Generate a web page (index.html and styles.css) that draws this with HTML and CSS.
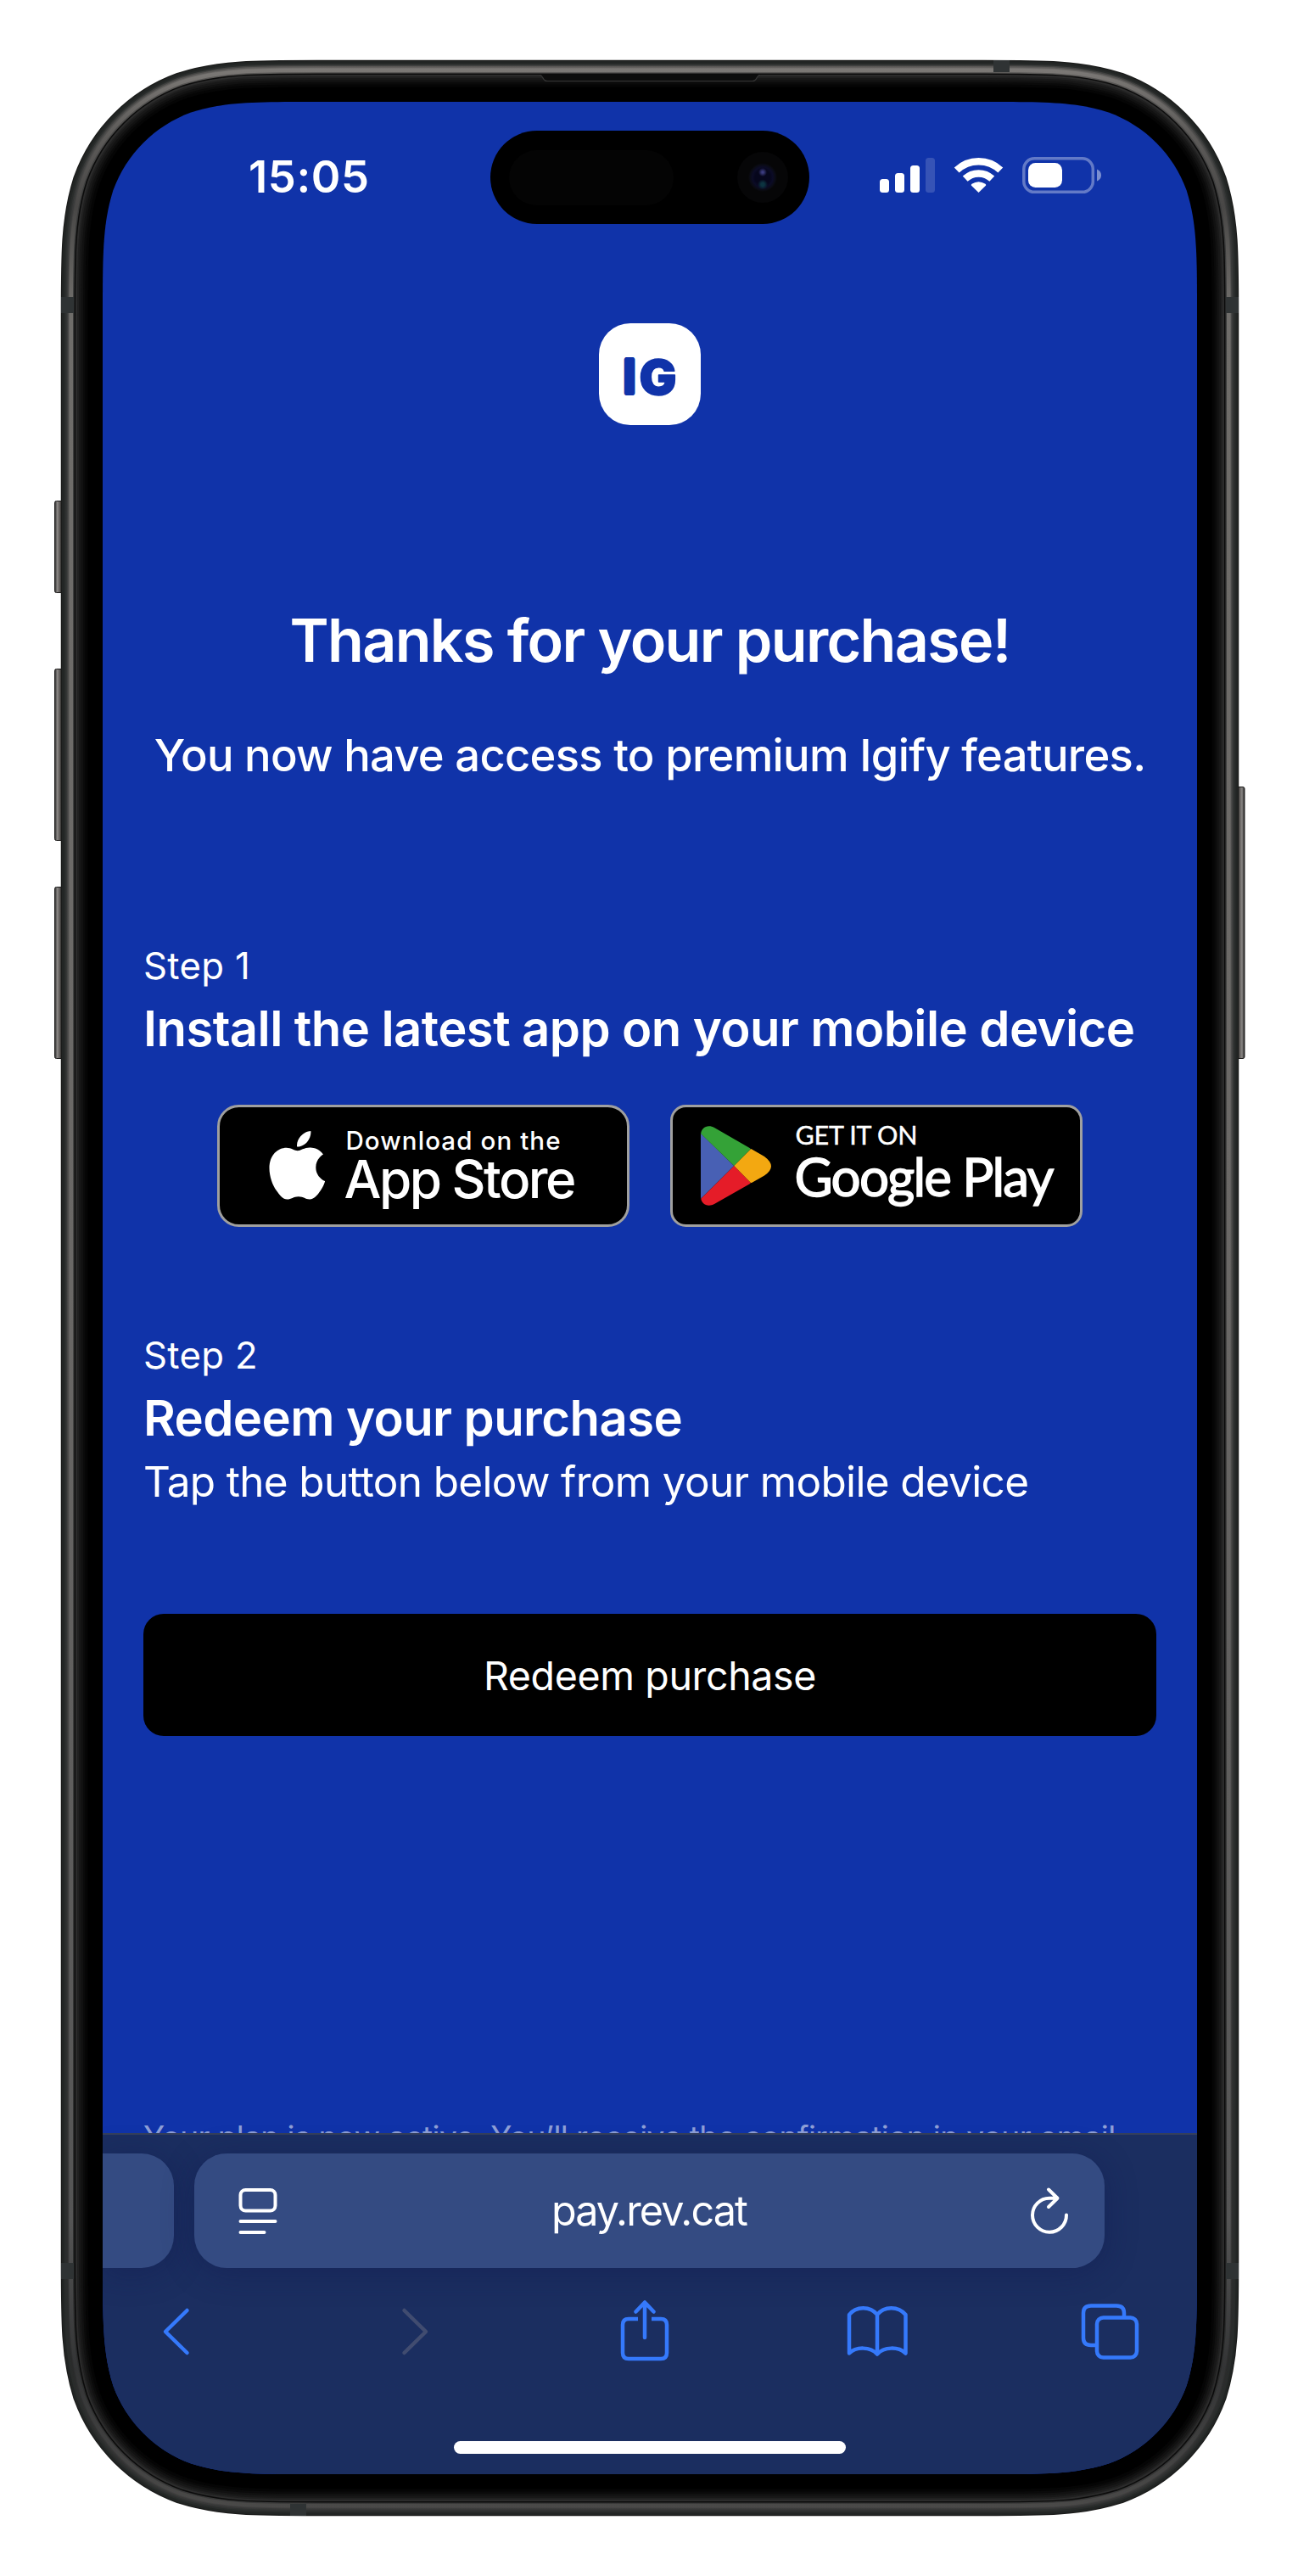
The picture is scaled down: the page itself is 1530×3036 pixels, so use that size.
FILE: index.html
```html
<!DOCTYPE html>
<html lang="en">
<head>
<meta charset="utf-8">
<title>Thanks for your purchase!</title>
<link rel="stylesheet" href="styles.css">
</head>
<body>
<div class="stage">
  <svg class="frame" width="1530" height="3036" viewBox="0 0 1530 3036" aria-hidden="true">
    <defs>
      <linearGradient id="metal" gradientUnits="userSpaceOnUse" x1="0" y1="70" x2="0" y2="2966">
        <stop offset="0" stop-color="#807d7a"/><stop offset=".03" stop-color="#5e5c5a"/><stop offset=".06" stop-color="#484746"/><stop offset=".1" stop-color="#6f6d6a"/><stop offset=".5" stop-color="#6a6866"/><stop offset=".88" stop-color="#555"/><stop offset=".94" stop-color="#333435"/><stop offset="1" stop-color="#4c4b4a"/>
      </linearGradient>
      <linearGradient id="metal2" gradientUnits="userSpaceOnUse" x1="0" y1="70" x2="0" y2="2966">
        <stop offset="0" stop-color="#5c5a58"/><stop offset=".06" stop-color="#393a3a"/><stop offset=".5" stop-color="#474746"/><stop offset=".94" stop-color="#2a2b2b"/><stop offset="1" stop-color="#3a3a3a"/>
      </linearGradient>
      <linearGradient id="keyL" x1="0" y1="0" x2="1" y2="0"><stop offset="0" stop-color="#222"/><stop offset=".25" stop-color="#8a8785"/><stop offset=".6" stop-color="#4a4644"/><stop offset="1" stop-color="#252322"/></linearGradient>
      <linearGradient id="keyR" x1="1" y1="0" x2="0" y2="0"><stop offset="0" stop-color="#222"/><stop offset=".25" stop-color="#8a8785"/><stop offset=".6" stop-color="#4a4644"/><stop offset="1" stop-color="#252322"/></linearGradient>
      <path id="body" d="M373.2 120H1158.8C1231.4 120 1267.7 120 1306.8 132.4C1349.5 147.9 1383.1 181.5 1398.6 224.2C1411 263.3 1411 299.6 1411 372.2V2663.8C1411 2736.4 1411 2772.7 1398.6 2811.8C1383.1 2854.5 1349.5 2888.1 1306.8 2903.6C1267.7 2916 1231.4 2916 1158.8 2916H373.2C300.6 2916 264.3 2916 225.2 2903.6C182.5 2888.1 148.9 2854.5 133.4 2811.8C121 2772.7 121 2736.4 121 2663.8V372.2C121 299.6 121 263.3 133.4 224.2C148.9 181.5 182.5 147.9 225.2 132.4C264.3 120 300.6 120 373.2 120Z"/>
    </defs>
    <g stroke="#1c1b1b" stroke-width="1">
      <rect x="64.500" y="590.500" width="12" height="108" rx="2" fill="url(#keyL)"/>
      <rect x="64.500" y="788.500" width="12" height="202" rx="2" fill="url(#keyL)"/>
      <rect x="64.500" y="1045.500" width="12" height="202" rx="2" fill="url(#keyL)"/>
      <rect x="1455" y="927.500" width="12" height="320" rx="2" fill="url(#keyR)"/>
    </g>
    <g fill="none">
      <use href="#body" stroke="#1b1c1b" stroke-width="98.500"/>
      <use href="#body" stroke="#222524" stroke-width="96"/>
      <use href="#body" stroke="#292c2b" stroke-width="91"/>
      <use href="#body" stroke="url(#metal2)" stroke-width="87" opacity=".5"/>
      <use href="#body" stroke="url(#metal2)" stroke-width="84"/>
      <use href="#body" stroke="url(#metal)" stroke-width="81" opacity=".5"/>
      <use href="#body" stroke="url(#metal)" stroke-width="79"/>
      <use href="#body" stroke="url(#metal2)" stroke-width="70"/>
      <use href="#body" stroke="#0b0b0b" stroke-width="67"/>
      <use href="#body" stroke="#2b2b2b" stroke-width="64"/>
      <use href="#body" stroke="#202020" stroke-width="60"/>
      <use href="#body" stroke="#181818" stroke-width="56"/>
      <use href="#body" stroke="#111" stroke-width="51"/>
      <use href="#body" stroke="#0a0a0a" stroke-width="46"/>
      <use href="#body" stroke="#050505" stroke-width="41"/>
      <use href="#body" stroke="#000" stroke-width="35"/>
    </g>
    <g fill="#2f3334">
      <rect x="72" y="350" width="15" height="19"/><rect x="1445" y="350" width="15" height="19"/>
      <rect x="72" y="2667" width="15" height="19"/><rect x="1445" y="2667" width="15" height="19"/>
      <rect x="1171" y="71" width="19" height="14"/><rect x="342" y="2951" width="19" height="14"/>
    </g>
    <path d="M636 87.500C641 88 639 95.500 645 95.500H887C893 95.500 891 88 896 87.500Z" fill="#0c0c0c"/>
    <path d="M636 88.500C641 89 639 95.500 645 95.500H887C893 95.500 891 89 896 88.500" fill="none" stroke="#343434" stroke-width="1.200"/>
  </svg>

  <main class="screen">
    <header class="status">
      <span class="time">15:05</span>
      <div class="island"><span class="sensor"></span><span class="camera"></span></div>
      <svg class="indicators" width="264" height="44" viewBox="1036 185 264 44">
        <g fill="#fff"><rect x="1037" y="211" width="11" height="16" rx="3.500"/><rect x="1055" y="204" width="11" height="23" rx="3.500"/><rect x="1073" y="195" width="11" height="32" rx="3.500"/><rect x="1091" y="186" width="11" height="41" rx="3.500" opacity=".16"/></g>
        <g fill="none" stroke="#fff" stroke-width="8.500"><path d="M1127.700 200.500A37.500 37.500 0 0 1 1179.300 200.500"/><path d="M1137.700 210.700A23 23 0 0 1 1169.300 210.700"/></g>
        <path d="M1153.500 227L1144.800 218.400Q1144.600 217.500 1145.500 216.800Q1153.500 211.500 1161.500 216.800Q1162.400 217.500 1162.200 218.400Z" fill="#fff"/>
        <rect x="1206.800" y="186.800" width="81.500" height="39.500" rx="12.500" fill="none" stroke="#fff" stroke-width="3.500" opacity=".35"/>
        <rect x="1212" y="192" width="40" height="29" rx="8.500" fill="#fff"/>
        <path d="M1293 199.500Q1298 201.500 1298 206.500T1293 213.500Z" fill="#fff" opacity=".45"/>
      </svg>
    </header>

    <section class="page">
      <div class="logo"><svg width="120" height="120" viewBox="0 0 120 120"><text class="mark mark-i" x="30" y="82" textLength="12" lengthAdjust="spacingAndGlyphs">I</text><text class="mark mark-g" x="47.500" y="83.500" textLength="44" lengthAdjust="spacingAndGlyphs">G</text></svg></div>
      <h1 class="title"><span>Thanks for your purchase!</span></h1>
      <p class="lead"><span>You now have access to premium Igify features.</span></p>

      <p class="step step-one"><span>Step 1</span></p>
      <h2 class="heading"><span>Install the latest app on your mobile device</span></h2>
      <div class="badges">
        <svg width="486" height="144" viewBox="0 0 486 144" role="img" aria-label="App Store">
          <rect x="1.500" y="1.500" width="483" height="141" rx="24" fill="#000" stroke="#a0a09f" stroke-width="3"/>
          <g transform="translate(61.500 31) scale(.0806)" fill="#fff"><path d="M788.100 340.900c-5.800 4.500-108.200 62.200-108.200 190.500 0 148.400 130.300 200.900 134.200 202.200-.6 3.200-20.700 71.900-68.700 141.900-42.800 61.600-87.500 123.100-155.500 123.100s-85.500-39.500-164-39.500c-76.500 0-103.700 40.800-165.900 40.800s-105.600-57-155.500-127C46.700 790.700 0 663 0 541.800c0-194.400 126.400-297.500 250.800-297.500 66.100 0 121.200 43.400 162.700 43.400 39.500 0 101.100-46 176.300-46 28.500 0 130.900 2.600 198.300 99.200zm-234-181.500c31.100-36.900 53.100-88.100 53.100-139.300 0-7.100-.6-14.300-1.900-20.100-50.600 1.900-110.800 33.700-147.100 75.800-28.500 32.400-55.100 83.600-55.100 135.500 0 7.800 1.300 15.600 1.900 18.100 3.200.6 8.400 1.300 13.600 1.300 45.400 0 102.500-30.400 135.500-71.300z"/></g>
          <text class="b-small" x="151.500" y="53" textLength="253">Download on the</text>
          <text class="b-large" x="149.500" y="109.700" textLength="274">App Store</text>
        </svg>
        <svg width="486" height="144" viewBox="0 0 486 144" role="img" aria-label="Google Play">
          <rect x="1.500" y="1.500" width="483" height="141" rx="17" fill="#000" stroke="#a0a09f" stroke-width="3"/>
          <clipPath id="tri"><path d="M36 36C36 26 45 23 52 27L111 61Q119 67 119 72.500T111 83.500L52 117C45 121 36 118 36 108Z"/></clipPath>
          <g clip-path="url(#tri)"><path fill="#4860b4" d="M30 28L75.300 72L30 117Z"/><path fill="#34a237" d="M36 34L30 28V15H70L95 52.300L75.300 72Z"/><path fill="#e51c28" d="M36 111L30 117V130H70L95 92L75.300 72Z"/><path fill="#f3a811" d="M95 52.300L130 40V105L95 92L75.300 72Z"/></g>
          <text class="g-small" x="147.500" y="46.700" textLength="144">GET IT ON</text>
          <text class="g-large" x="146.500" y="108" textLength="306">Google Play</text>
        </svg>
      </div>

      <p class="step step-two"><span>Step 2</span></p>
      <h2 class="heading"><span>Redeem your purchase</span></h2>
      <p class="hint"><span>Tap the button below from your mobile device</span></p>
      <a class="redeem"><span>Redeem purchase</span></a>
      <p class="note"><span>Your plan is now active. You’ll receive the confirmation in your email</span></p>
    </section>

    <nav class="browser">
      <div class="tabs">
        <div class="tab previous"></div>
        <div class="tab address">
          <svg width="46" height="56" viewBox="281.500 2578 46 56" fill="none" stroke="#fff" stroke-width="4"><rect x="284" y="2581" width="41" height="24.500" rx="6"/><path d="M284 2618H325M284 2631H312" stroke-linecap="round"/></svg>
          <span class="url">pay.rev.cat</span>
          <svg width="46" height="58" viewBox="1214 2575 46 58" fill="none" stroke="#fff" stroke-width="4" stroke-linecap="round" stroke-linejoin="round"><path d="M1257 2608.500A20 20 0 1 1 1237 2588.700H1246M1236 2578.500L1246.500 2588.700L1236 2599"/></svg>
        </div>
      </div>
      <svg class="tools" width="1290" height="80" viewBox="121 2708 1290 80" fill="none" stroke="#3579fb" stroke-width="4.500" stroke-linecap="round" stroke-linejoin="round">
        <path d="M220.500 2723L195 2748L220.500 2773"/>
        <path d="M476.500 2723L502 2748L476.500 2773" stroke="#414c70"/>
        <path stroke-linecap="butt" d="M752 2733H741Q734 2733 734 2740V2773Q734 2780 741 2780H779Q786 2780 786 2773V2740Q786 2733 779 2733H768"/>
        <path d="M760 2755V2714M749.500 2724.500L760 2713.500L770.500 2724.500"/>
        <path d="M1034 2728C1026 2717.500 1009 2717.500 1001 2728V2773.500C1009 2765.500 1026 2765.500 1034 2774.500C1042 2765.500 1059 2765.500 1067.500 2773.500V2728C1059 2717.500 1042 2717.500 1034 2728ZV2774"/>
        <rect x="1293" y="2731.500" width="47" height="47" rx="7.500"/>
        <path stroke-linecap="butt" d="M1293 2764H1286Q1277 2764 1277 2755.500V2726Q1277 2717.500 1286 2717.500H1316Q1325 2717.500 1325 2726V2731"/>
      </svg>
      <div class="home"></div>
    </nav>
  </main>
</div>
</body>
</html>
```
FILE: styles.css
```css
* { box-sizing: border-box; }
body { margin: 0; background: #fff; font-family: Inter, "Liberation Sans", sans-serif; color: #fff; font-optical-sizing: none; }
h1, h2, p { margin: 0; white-space: nowrap; }
svg { display: block; flex: none; }
.stage { position: relative; width: 1530px; height: 3036px; padding: 120px 119px 120px 121px; overflow: hidden; }
.frame { position: absolute; left: 0; top: 0; }
.screen {
  position: relative; width: 1290px; height: 2796px; display: flex; flex-direction: column; background: #1033a9;
  clip-path: path("M252.200 0H1037.800C1110.400 0 1146.700 0 1185.800 12.400C1228.500 27.900 1262.100 61.500 1277.600 104.200C1290 143.300 1290 179.600 1290 252.200V2543.800C1290 2616.400 1290 2652.700 1277.600 2691.800C1262.100 2734.500 1228.500 2768.100 1185.800 2783.600C1146.700 2796 1110.400 2796 1037.800 2796H252.200C179.600 2796 143.300 2796 104.200 2783.600C61.500 2768.100 27.900 2734.500 12.400 2691.800C0 2652.700 0 2616.400 0 2543.800V252.200C0 179.600 0 143.300 12.400 104.200C27.900 61.500 61.500 27.900 104.200 12.400C143.300 0 179.600 0 252.200 0Z");
}
.status { height: 261px; padding: 34px 111px 0 172px; display: flex; align-items: flex-start; flex: none; }
.time { width: 285px; margin-top: 22px; font-size: 52.500px; line-height: 64px; font-weight: 600; letter-spacing: .6px; }
.island { width: 376px; height: 110px; border-radius: 55px; background: #000; display: flex; align-items: center; justify-content: space-between; padding: 0 25px 0 22px; }
.sensor { width: 194px; height: 65px; border-radius: 33px; background: #040404; }
.camera { width: 60px; height: 60px; border-radius: 50%; background: radial-gradient(circle at 50% 40%, #3c3c80 0 1px, transparent 5px), radial-gradient(circle at 50% 64%, #0c3340 0 2px, transparent 6px), radial-gradient(circle, #06061c 0 9px, #0b0b26 12px, #0a0b14 15px, #060607 17px); }
.indicators { margin: 31px 0 0 82px; }
.page { flex: 1; min-height: 0; overflow: hidden; padding: 0 48px; display: flex; flex-direction: column; }
.logo { align-self: center; width: 120px; height: 120px; border-radius: 37px; background: #fff; flex: none; }
.mark { font-family: Inter, sans-serif; font-weight: 900; fill: #1033a9; stroke: #1033a9; stroke-linejoin: round; }
.mark-i { font-size: 54px; stroke-width: 6px; }
.mark-g { font-size: 57px; stroke-width: 1.500px; }
.title { margin-top: 208px; text-align: center; font-size: 70px; line-height: 92px; font-weight: 600; letter-spacing: -1.700px; }
.lead { margin-top: 53px; text-align: center; font-size: 52.500px; line-height: 72px; font-weight: 450; letter-spacing: -.700px; }
.step { font-size: 43.700px; line-height: 60px; letter-spacing: .300px; }
.step-one { margin-top: 183px; }
.heading { margin-top: 7px; font-size: 58px; line-height: 72px; font-weight: 600; letter-spacing: -.580px; }
.badges { display: flex; justify-content: center; gap: 48px; margin: 54px 1px 0 0; }
.b-small { font: 500 29.500px Inter, sans-serif; fill: #fff; }
.b-large { font: 500 62px Inter, sans-serif; fill: #fff; }
.g-small { font: 400 30.500px Lato, sans-serif; fill: #fff; stroke: #fff; stroke-width: .4px; }
.g-large { font: 400 62px Lato, sans-serif; fill: #fff; stroke: #fff; stroke-width: 1.400px; }
.step-two { margin-top: 122px; }
.hint { margin-top: 3px; font-size: 49.500px; line-height: 72px; letter-spacing: -.670px; }
.redeem { margin-top: 120px; height: 144px; flex: none; border-radius: 24px; background: #000; display: flex; align-items: center; justify-content: center; padding-top: 1px; font-size: 46.500px; line-height: 60px; letter-spacing: -.350px; }
.note { margin-top: 449px; font-size: 37px; line-height: 48px; letter-spacing: -.590px; color: rgba(255,255,255,.55); }
.browser { height: 402px; flex: none; background: #1b2e60; border-top: 2px solid #343f5c; padding-top: 22px; display: flex; flex-direction: column; }
.tabs { display: flex; gap: 24px; height: 135px; flex: none; }
.tab { background: #344b82; border-radius: 38px; box-shadow: 0 6px 36px rgba(16,24,76,.38); }
.previous { width: 84px; border-radius: 0 38px 38px 0; }
.address { width: 1073px; padding: 0 42px 0 52px; display: flex; align-items: center; justify-content: space-between; }
.url { font-size: 48.500px; line-height: 60px; letter-spacing: -1.900px; margin-right: 11px; }
.tools { margin-top: 35px; }
.home { width: 462px; height: 15px; border-radius: 8px; background: #fff; margin: 89px auto 0; }
```
